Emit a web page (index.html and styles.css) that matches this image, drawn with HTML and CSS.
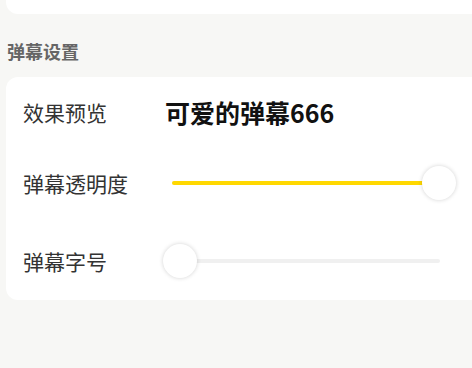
FILE: index.html
```html
<!DOCTYPE html>
<html lang="zh">
<head>
<meta charset="utf-8">
<link rel="stylesheet" href="styles.css">
</head>
<body>
<div class="top-card"></div>
<div class="section-title">弹幕设置</div>
<div class="card">
  <div class="row row-preview">
    <div class="label">效果预览</div>
    <div class="preview">可爱的弹幕666</div>
  </div>
  <div class="row row-opacity">
    <div class="label">弹幕透明度</div>
    <div class="slider">
      <div class="track"><div class="fill" style="width:100%"></div></div>
      <div class="thumb" style="left:259px"></div>
    </div>
  </div>
  <div class="row row-size">
    <div class="label">弹幕字号</div>
    <div class="slider">
      <div class="track"><div class="fill" style="width:0%"></div></div>
      <div class="thumb" style="left:0px"></div>
    </div>
  </div>
</div>
</body>
</html>
```
FILE: styles.css
```css
html, body {
  margin: 0;
  padding: 0;
}
body {
  background: #f7f7f5;
  font-family: "Noto Sans CJK SC", "Noto Sans", sans-serif;
  width: 472px;
  height: 368px;
  overflow: hidden;
}
.top-card {
  height: 14px;
  margin-left: 6px;
  margin-right: -12px;
  background: #fff;
  border-radius: 0 0 12px 12px;
}
.section-title {
  padding: 24px 0 0 7px;
  height: 63px;
  box-sizing: border-box;
  font-size: 18px;
  line-height: 26px;
  font-weight: bold;
  color: #666;
}
.card {
  margin-left: 6px;
  margin-right: -12px;
  background: #fff;
  border-radius: 12px;
  padding-left: 17px;
  display: flex;
  flex-direction: column;
}
.row {
  display: flex;
  align-items: center;
}
.row-preview { height: 70px; }
.row-opacity { height: 72px; }
.row-size { height: 79px; padding-top: 2px; }
.label {
  width: 140px;
  font-size: 21px;
  color: #333;
}
.preview {
  font-size: 25px;
  font-weight: bold;
  color: #111;
  margin-left: 2px;
}
.slider {
  position: relative;
  width: 293px;
  height: 34px;
}
.track {
  position: absolute;
  left: 9px;
  right: 16px;
  top: 15px;
  height: 4px;
  border-radius: 2px;
  background: #f0f0f0;
}
.fill {
  height: 100%;
  border-radius: 2px;
  background: #ffd800;
}
.thumb {
  position: absolute;
  top: 0;
  width: 34px;
  height: 34px;
  border-radius: 50%;
  background: #fff;
  box-shadow: 0 0 4px rgba(0, 0, 0, 0.18);
}
```
